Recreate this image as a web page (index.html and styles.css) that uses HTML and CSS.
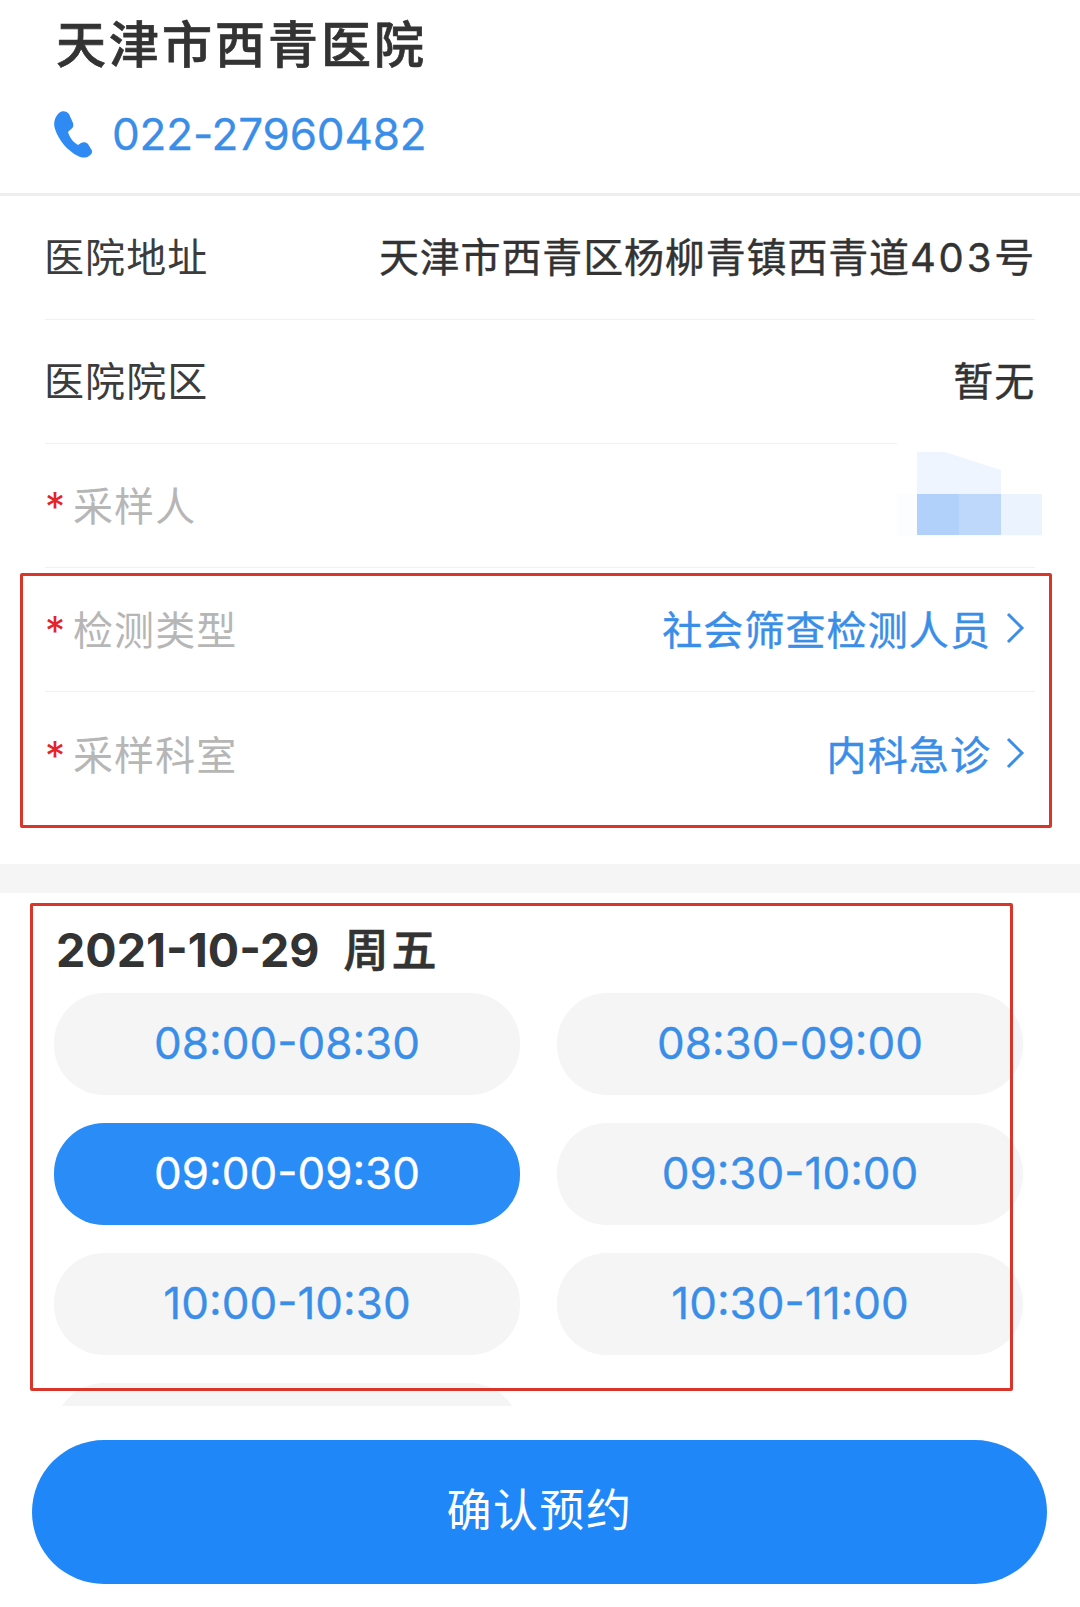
FILE: index.html
```html
<!DOCTYPE html>
<html lang="zh-CN">
<head>
  <meta charset="UTF-8">
  <meta name="viewport" content="width=device-width, initial-scale=1.0">
  <title>天津市西青医院</title>
  <link rel="stylesheet" href="styles.css">
</head>
<body>
  <div class="page">
    <div class="header">
      <h1 class="hospital">天津市西青医院</h1>
      <div class="phone">
        <svg class="phone-icon" viewBox="0 0 40 48"><path d="M6 3C9 0 14 1 16 4L20 13C21 16 20 18 17 20L15 22C17 28 20 32 25 35L28 33C30 32 33 32 35 34L38 39C40 42 39 44 36 46C33 48 29 48 25 46C15 41 6 31 2 19C0 12 2 7 6 3Z"/></svg>
        <span>022-27960482</span>
      </div>
    </div>

    <div class="form">
      <div class="row">
        <span class="label">医院地址</span>
        <span class="value">天津市西青区杨柳青镇西青道<span class="num">403</span>号</span>
      </div>
      <div class="row">
        <span class="label">医院院区</span>
        <span class="value">暂无</span>
      </div>
      <div class="row pick">
        <span class="label required"><i>*</i>采样人</span>
      </div>
      <div class="row pick">
        <span class="label required"><i>*</i>检测类型</span>
        <span class="value link">社会筛查检测人员
          <svg class="chevron" viewBox="0 0 20 32"><path d="M3 2L17 16L3 30"/></svg>
        </span>
      </div>
      <div class="row pick last">
        <span class="label required"><i>*</i>采样科室</span>
        <span class="value link">内科急诊
          <svg class="chevron" viewBox="0 0 20 32"><path d="M3 2L17 16L3 30"/></svg>
        </span>
      </div>
    </div>

    <div class="band"></div>

    <div class="slots">
      <div class="date">2021-10-29<span class="weekday">周五</span></div>
      <div class="slot-grid">
        <div class="slot">08:00-08:30</div>
        <div class="slot">08:30-09:00</div>
        <div class="slot active">09:00-09:30</div>
        <div class="slot">09:30-10:00</div>
        <div class="slot">10:00-10:30</div>
        <div class="slot">10:30-11:00</div>
        <div class="slot"></div>
      </div>
    </div>

    <button class="confirm">确认预约</button>

    <!-- mosaic over the sampler's name -->
    <svg class="mosaic" viewBox="0 0 145 96">
      <rect x="0" y="0" width="145" height="8" fill="#fff"/>
      <rect x="0" y="54" width="145" height="42" fill="#fcfdff"/>
      <path d="M20 12H48L104 30V54H20Z" fill="#eff5fe"/>
      <rect x="20" y="54" width="42" height="41" fill="#b2d1fa"/>
      <rect x="62" y="54" width="42" height="41" fill="#bdd8fb"/>
      <rect x="104" y="54" width="41" height="41" fill="#ebf3fe"/>
    </svg>

    <div class="mark mark-form"></div>
    <div class="mark mark-slots"></div>
  </div>
</body>
</html>
```

FILE: styles.css
```css
body {
  margin: 0;
  background: #fff;
  font-family: Inter, "Noto Sans CJK SC", sans-serif;
  color: #333;
}
.page {
  position: relative;
  width: 1080px;
  height: 1607px;
  overflow: hidden;
  background: #fff;
}
.header {
  height: 193px;
  padding-left: 56px;
  border-bottom: 3px solid #eeeeee;
}
.hospital {
  margin: 0;
  padding-top: 10px;
  font-size: 50px;
  line-height: 70px;
  font-weight: 500;
  letter-spacing: 3px;
  color: #333;
  -webkit-text-stroke: 0.7px #333;
}
.phone {
  display: flex;
  align-items: center;
  gap: 19px;
  margin-top: 24px;
  margin-left: -3px;
  font-size: 44px;
  line-height: 60px;
  letter-spacing: -0.15px;
  color: #3a8ee8;
  -webkit-text-stroke: 0.3px #3a8ee8;
}
.phone-icon {
  width: 40px;
  height: 48px;
  fill: #2f8bf3;
}
.form {
  margin: 0 45px;
}
.row {
  display: flex;
  justify-content: space-between;
  align-items: center;
  box-sizing: border-box;
  height: 124px;
  padding-bottom: 5px;
  border-bottom: 1px solid #f1f1f1;
  font-size: 40px;
  letter-spacing: 1.1px;
}
.row.pick {
  padding-bottom: 3px;
}
.row.last {
  border-bottom: none;
}
.label {
  margin-left: -1px;
  color: #3c3c3c;
}
.label.required {
  margin-left: 0;
  color: #b6b6b6;
}
.label i {
  display: inline-block;
  width: 28px;
  font-style: normal;
  color: #e5232a;
}
.value {
  letter-spacing: 0.85px;
  color: #333;
  -webkit-text-stroke: 0.4px #333;
}
.num {
  letter-spacing: 2.8px;
}
.value.link {
  display: flex;
  align-items: center;
  gap: 14px;
  padding-right: 10px;
  letter-spacing: 1.1px;
  color: #3a8ee8;
  -webkit-text-stroke: 0.4px #3a8ee8;
}
.chevron {
  width: 20px;
  height: 32px;
  fill: none;
  stroke: #3a8ee8;
  stroke-width: 3;
}
.band {
  height: 29px;
  margin-top: 48px;
  background: #f5f5f5;
}
.slots {
  height: 513px;
  overflow: hidden;
}
.date {
  padding: 28px 0 0 56px;
  height: 72px;
  font-size: 46.5px;
  line-height: 58px;
  font-weight: 700;
  color: #333;
}
.weekday {
  margin-left: 24px;
  font-size: 45px;
  font-weight: 500;
  letter-spacing: 3px;
  -webkit-text-stroke: 0.7px #333;
}
.slot-grid {
  display: grid;
  grid-template-columns: 466px 466px;
  grid-auto-rows: 102px;
  column-gap: 37px;
  row-gap: 28px;
  padding-left: 54px;
}
.slot {
  display: flex;
  align-items: center;
  justify-content: center;
  padding-bottom: 2px;
  box-sizing: border-box;
  border-radius: 50px;
  background: #f5f5f6;
  font-size: 44px;
  color: #3a8ee8;
  -webkit-text-stroke: 0.3px #3a8ee8;
}
.slot.active {
  background: #2a8cf7;
  color: #fff;
  -webkit-text-stroke: 0.3px #fff;
}
.confirm {
  display: block;
  width: 1015px;
  height: 144px;
  margin: 34px 0 0 32px;
  padding: 0 0 10px;
  border: none;
  border-radius: 72px;
  background: #2087f8;
  color: #fff;
  font-family: inherit;
  font-size: 45px;
  letter-spacing: 1.5px;
}
.mosaic {
  position: absolute;
  left: 897px;
  top: 440px;
  width: 145px;
  height: 96px;
}
.mark {
  position: absolute;
  box-sizing: border-box;
  border: 3px solid #d9352b;
  border-radius: 2px;
}
.mark-form {
  left: 20px;
  top: 573px;
  width: 1032px;
  height: 255px;
}
.mark-slots {
  left: 30px;
  top: 903px;
  width: 983px;
  height: 488px;
}
```
